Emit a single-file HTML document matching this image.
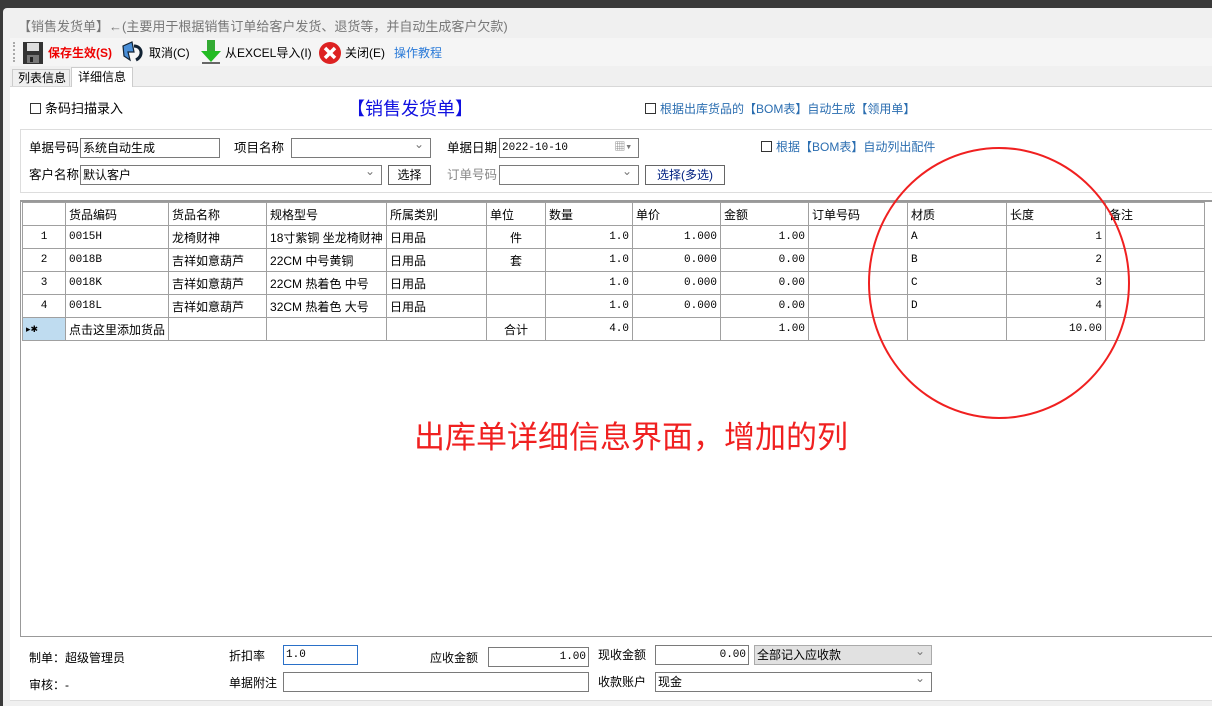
<!DOCTYPE html>
<html><head><meta charset="utf-8"><style>
*{margin:0;padding:0;box-sizing:border-box}
body{width:1212px;height:706px;overflow:hidden;background:#3a3a3a;font-family:"Liberation Sans","Noto Sans CJK SC",sans-serif;font-size:12px;color:#000;position:relative}
.a{position:absolute;white-space:nowrap;line-height:16px}
.win{position:absolute;left:3px;top:8px;width:1209px;height:698px;background:#f0f0f0;border-radius:4px 0 0 0}
.panel{position:absolute;left:10px;top:86px;width:1202px;height:614px;background:#fff;border-top:1px solid #d8d8d8}
.inp{position:absolute;background:#fff;border:1px solid #7a7a7a;height:20px;font-size:12px;padding:1px 2px;line-height:16px}
.chk{display:inline-block;width:11px;height:11px;border:1px solid #333;vertical-align:-1px;margin-right:4px;background:#fff}
.btn{position:absolute;border:1px solid #666;background:#fff;height:20px;text-align:center;line-height:18px}
.dd::after{content:"⌄";position:absolute;right:6px;top:-3px;color:#777;font-size:12px}
table{border-collapse:collapse;position:absolute;left:22px;top:202px;font-size:12px}
td{border:1px solid #a0a0a0;height:23px;padding:0 3px;white-space:nowrap;overflow:hidden}
.m{font-family:"Liberation Mono","Noto Sans CJK SC",monospace;font-size:11px}
.r{text-align:right}.c{text-align:center}
</style></head><body>
<div class="win"></div>
<div class="a" style="left:18px;top:19px;color:#777;font-size:13px">【销售发货单】←(主要用于根据销售订单给客户发货、退货等，并自动生成客户欠款)</div>
<div class="a" style="left:10px;top:38px;width:1202px;height:28px;background:#f5f5f5"></div>
<div class="a" style="left:13px;top:42px;height:20px;border-left:2px dotted #aaa"></div>
<svg class="a" style="left:22px;top:41px" width="22" height="24" viewBox="0 0 22 24"><rect x="1" y="1" width="20" height="22" fill="#333"/><rect x="5" y="2" width="12" height="8" fill="#ddd"/><rect x="5" y="14" width="12" height="8" fill="#777"/><rect x="8" y="16" width="3" height="5" fill="#222"/></svg>
<div class="a" style="left:48px;top:45px;color:#e00;font-weight:bold;font-size:12px">保存生效(S)</div>
<svg class="a" style="left:120px;top:40px" width="26" height="24" viewBox="0 0 26 24"><path d="M3 6 L12 2 L14 12 L8 12 L10 20 L4 16 Z" fill="#4a8fd8" stroke="#123" stroke-width="1.2"/><path d="M14 6 C22 6 24 16 16 20" fill="none" stroke="#123" stroke-width="3"/></svg>
<div class="a" style="left:149px;top:45px">取消(C)</div>
<svg class="a" style="left:200px;top:39px" width="22" height="26" viewBox="0 0 22 26"><rect x="7" y="1" width="8" height="12" fill="#3a3"/><path d="M1 12 L21 12 L11 23 Z" fill="#2b2"/><rect x="2" y="23" width="18" height="2" fill="#666"/></svg>
<div class="a" style="left:225px;top:45px">从EXCEL导入(I)</div>
<svg class="a" style="left:318px;top:41px" width="24" height="24" viewBox="0 0 24 24"><circle cx="12" cy="12" r="11" fill="#d22"/><path d="M7 7 L17 17 M17 7 L7 17" stroke="#fff" stroke-width="3.5"/></svg>
<div class="a" style="left:345px;top:45px">关闭(E)</div>
<div class="a" style="left:394px;top:45px;color:#2a7ad8">操作教程</div>
<div class="a" style="left:12px;top:69px;width:58px;height:18px;border:1px solid #ccc;background:#f0f0f0;padding-left:5px;line-height:16px">列表信息</div>
<div class="a" style="left:71px;top:67px;width:62px;height:20px;border:1px solid #ccc;border-bottom:none;background:#fff;padding-left:6px;line-height:18px;z-index:2">详细信息</div>
<div class="panel"></div>
<div class="a" style="left:30px;top:101px;font-size:13px"><span class="chk"></span>条码扫描录入</div>
<div class="a" style="left:347px;top:98px;font-size:18px;line-height:22px;color:#1010e0">【销售发货单】</div>
<div class="a" style="left:645px;top:101px;color:#2a6db0"><span class="chk"></span>根据出库货品的【BOM表】自动生成【领用单】</div>
<div class="a" style="left:20px;top:129px;width:1192px;height:1px;background:#ddd"></div>
<div class="a" style="left:20px;top:129px;width:1px;height:64px;background:#ddd"></div>
<div class="a" style="left:20px;top:192px;width:1192px;height:1px;background:#ddd"></div>
<div class="a" style="left:29px;top:140px;font-size:12.5px">单据号码</div>
<div class="inp" style="left:80px;top:138px;width:140px">系统自动生成</div>
<div class="a" style="left:234px;top:140px;font-size:12.5px">项目名称</div>
<div class="inp dd" style="left:291px;top:138px;width:140px"></div>
<div class="a" style="left:447px;top:140px;font-size:12.5px">单据日期</div>
<div class="inp m" style="left:499px;top:138px;width:140px">2022-10-10<span style="position:absolute;right:6px;top:1px;color:#777">▦▾</span></div>
<div class="a" style="left:761px;top:139px;color:#2a6db0"><span class="chk"></span>根据【BOM表】自动列出配件</div>
<div class="a" style="left:29px;top:167px;font-size:12.5px">客户名称</div>
<div class="inp dd" style="left:80px;top:165px;width:302px">默认客户</div>
<div class="btn" style="left:388px;top:165px;width:43px">选择</div>
<div class="a" style="left:447px;top:167px;font-size:12.5px;color:#888">订单号码</div>
<div class="inp dd" style="left:499px;top:165px;width:140px"></div>
<div class="btn" style="left:645px;top:165px;width:80px;color:#002080">选择(多选)</div>
<div class="a" style="left:20px;top:200px;width:1192px;height:437px;border:1px solid #999;border-top:2px solid #999;border-right:none"></div>
<table>
<colgroup><col style="width:43px"><col style="width:103px"><col style="width:98px"><col style="width:120px"><col style="width:100px"><col style="width:59px"><col style="width:87px"><col style="width:88px"><col style="width:88px"><col style="width:99px"><col style="width:99px"><col style="width:99px"><col style="width:99px"></colgroup>
<tr><td></td><td>货品编码</td><td>货品名称</td><td>规格型号</td><td>所属类别</td><td>单位</td><td>数量</td><td>单价</td><td>金额</td><td>订单号码</td><td>材质</td><td>长度</td><td>备注</td></tr>
<tr><td class="c m">1</td><td class="m">0015H</td><td>龙椅财神</td><td>18寸紫铜 坐龙椅财神</td><td>日用品</td><td class="c">件</td><td class="r m">1.0</td><td class="r m">1.000</td><td class="r m">1.00</td><td></td><td class="m">A</td><td class="r m">1</td><td></td></tr>
<tr><td class="c m">2</td><td class="m">0018B</td><td>吉祥如意葫芦</td><td>22CM 中号黄铜</td><td>日用品</td><td class="c">套</td><td class="r m">1.0</td><td class="r m">0.000</td><td class="r m">0.00</td><td></td><td class="m">B</td><td class="r m">2</td><td></td></tr>
<tr><td class="c m">3</td><td class="m">0018K</td><td>吉祥如意葫芦</td><td>22CM 热着色 中号</td><td>日用品</td><td></td><td class="r m">1.0</td><td class="r m">0.000</td><td class="r m">0.00</td><td></td><td class="m">C</td><td class="r m">3</td><td></td></tr>
<tr><td class="c m">4</td><td class="m">0018L</td><td>吉祥如意葫芦</td><td>32CM 热着色 大号</td><td>日用品</td><td></td><td class="r m">1.0</td><td class="r m">0.000</td><td class="r m">0.00</td><td></td><td class="m">D</td><td class="r m">4</td><td></td></tr>
<tr><td style="background:#bfdcf0;font-size:9px">▸✱</td><td>点击这里添加货品</td><td></td><td></td><td></td><td class="c">合计</td><td class="r m">4.0</td><td></td><td class="r m">1.00</td><td></td><td></td><td class="r m">10.00</td><td></td></tr>
</table>
<div class="a" style="left:868px;top:147px;width:262px;height:272px;border:2.5px solid #f02020;border-radius:50%"></div>
<div class="a" style="left:414px;top:420px;font-size:31px;line-height:36px;color:#f02020">出库单详细信息界面，增加的列</div>
<div class="a" style="left:29px;top:650px;font-size:12px">制单：超级管理员</div>
<div class="a" style="left:29px;top:677px;font-size:12px">审核：-</div>
<div class="a" style="left:229px;top:648px">折扣率</div>
<div class="inp m" style="left:283px;top:645px;width:75px;border-color:#2a70c8">1.0</div>
<div class="a" style="left:229px;top:675px">单据附注</div>
<div class="inp" style="left:283px;top:672px;width:306px"></div>
<div class="a" style="left:430px;top:650px">应收金额</div>
<div class="inp m r" style="left:488px;top:647px;width:101px">1.00</div>
<div class="a" style="left:598px;top:647px">现收金额</div>
<div class="inp m r" style="left:655px;top:645px;width:94px">0.00</div>
<div class="inp dd" style="left:754px;top:645px;width:178px;background:#e1e1e1;border-color:#aaa">全部记入应收款</div>
<div class="a" style="left:598px;top:674px">收款账户</div>
<div class="inp dd" style="left:655px;top:672px;width:277px">现金</div>
<div class="a" style="left:10px;top:700px;width:1202px;height:6px;background:#f0f0f0;border-top:1px solid #ddd"></div>
</body></html>
